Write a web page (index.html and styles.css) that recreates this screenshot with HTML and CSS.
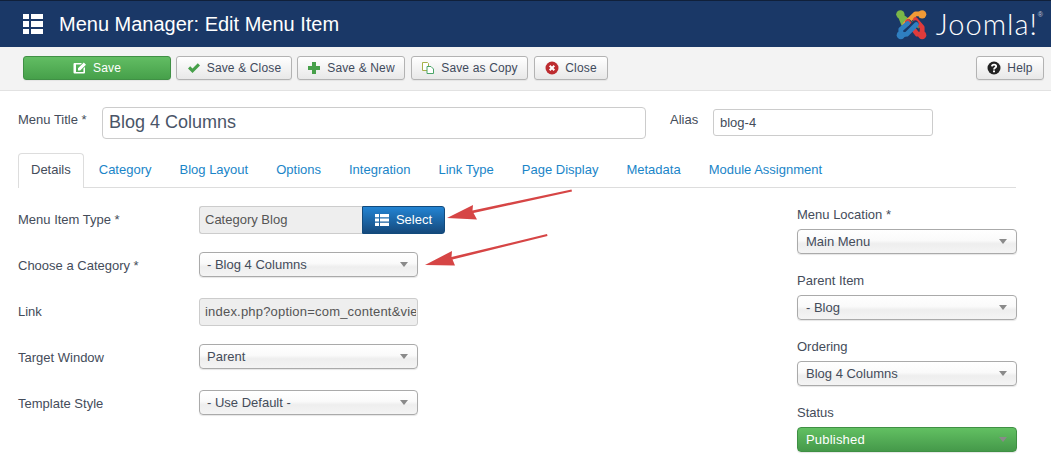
FILE: index.html
```html
<!DOCTYPE html>
<html lang="en">
<head>
<meta charset="utf-8">
<title>Menu Manager: Edit Menu Item</title>
<link rel="stylesheet" href="styles.css">
</head>
<body>
<div class="page">
  <header class="topbar">
    <div class="topbar-title">
      <svg class="title-icon" viewBox="0 0 20 20"><path fill="#fff" d="M0 0h6v5H0zM8 0h12v5H8zM0 7h6v6H0zM8 7h12v6H8zM0 15h6v5H0zM8 15h12v5H8z"/></svg>
      <h1>Menu Manager: Edit Menu Item</h1>
    </div>
    <div class="brand">
      <svg class="brand-mark" viewBox="0 0 32 32">
        <g fill="none" stroke-linecap="round" stroke-linejoin="round">
          <path stroke="#7ab648" stroke-width="5" d="M4 6 L8 16 M4 6 L21 19"/>
          <path stroke="#f09a36" stroke-width="5" d="M27 5 L20 5 L9 16"/>
          <path stroke="#1a3867" stroke-width="6.500" d="M13 14 L23 25"/>
          <path stroke="#df3b3b" stroke-width="5" d="M27 26 L22 26 L12 13 M27 26 L27 19 L20 11"/>
          <path stroke="#1a3867" stroke-width="6.500" d="M10 24 L20 15"/>
          <path stroke="#2f7fc1" stroke-width="5" d="M5 27 L5 21 L12 15 M5 27 L11 26 L21 16"/>
        </g>
        <circle cx="4.500" cy="5.500" r="4.300" fill="#7ab648"/>
        <circle cx="27" cy="5.500" r="4.300" fill="#f09a36"/>
        <circle cx="5" cy="27" r="4.300" fill="#2f7fc1"/>
        <circle cx="27" cy="27" r="4.300" fill="#df3b3b"/>
      </svg>
      <span class="brand-name">Joomla!</span><sup class="brand-reg">®</sup>
    </div>
  </header>

  <nav class="toolbar">
    <button class="btn btn-save" type="button">
      <svg class="ico" viewBox="0 0 14 14"><path fill="#fff" d="M1.500 2H9L7.500 3.600H3v7.400h7.400V7.500L12 6v5.500a1 1 0 0 1-1 1H1.500a1 1 0 0 1-1-1V3a1 1 0 0 1 1-1z"/><path fill="#fff" d="M5 7.300 10.800 1.500 13 3.700 7.200 9.500 5 9.500z"/></svg>
      Save
    </button>
    <button class="btn btn-close-save" type="button">
      <svg class="ico" viewBox="0 0 14 14"><path fill="#47a04a" d="M1 7.500 3.200 5.300 5.500 7.600 10.800 2.300 13 4.500 5.500 12z"/></svg>
      Save &amp; Close
    </button>
    <button class="btn btn-new" type="button">
      <svg class="ico" viewBox="0 0 14 14"><path fill="#47a04a" d="M5 1h4v4h4v4H9v4H5V9H1V5h4z"/></svg>
      Save &amp; New
    </button>
    <button class="btn btn-copy" type="button">
      <svg class="ico" viewBox="0 0 14 14"><path fill="#fff" stroke="#a6b04a" d="M1.500 1.500h5l1 1v7h-6z"/><path fill="#fff" stroke="#4aa568" d="M6 5.500h4l2.500 2.500v4.500H6z"/></svg>
      Save as Copy
    </button>
    <button class="btn btn-close" type="button">
      <svg class="ico" viewBox="0 0 14 14"><circle cx="7" cy="7" r="6.500" fill="#bd2c30"/><path stroke="#fff" stroke-width="2" d="M4.700 4.700l4.600 4.600M9.300 4.700l-4.600 4.600"/></svg>
      Close
    </button>
    <button class="btn btn-help" type="button">
      <svg class="ico" viewBox="0 0 14 14"><circle cx="7" cy="7" r="6.500" fill="#222"/><path fill="none" stroke="#fff" stroke-width="1.800" d="M4.900 5.400C5 2.900 9.200 3 9.200 5.300 9.200 6.800 7 6.700 7 8.500"/><path fill="#fff" d="M6 9.400h2v1.800H6z"/></svg>
      Help
    </button>
  </nav>

  <main class="content">
    <div class="title-row">
      <label class="title-label">Menu Title *</label>
      <input class="title-input" type="text" value="Blog 4 Columns">
      <label class="alias-label">Alias</label>
      <input class="alias-input" type="text" value="blog-4">
    </div>

    <ul class="tabs">
      <li class="tab tab-active">Details</li>
      <li class="tab">Category</li>
      <li class="tab">Blog Layout</li>
      <li class="tab">Options</li>
      <li class="tab">Integration</li>
      <li class="tab">Link Type</li>
      <li class="tab">Page Display</li>
      <li class="tab">Metadata</li>
      <li class="tab">Module Assignment</li>
    </ul>

    <div class="pane">
      <div class="fields">
        <div class="field">
          <label class="field-label">Menu Item Type *</label>
          <div class="input-group">
            <input class="readonly readonly-short" type="text" value="Category Blog" readonly>
            <button class="btn-select" type="button">
              <svg class="ico-select" viewBox="0 0 14 14"><path fill="#fff" d="M0 1h4v3.300H0zM5 1h9v3.300H5zM0 5.400h4v3.200H0zM5 5.400h9v3.200H5zM0 9.700h4V13H0zM5 9.700h9V13H5z"/></svg>
              Select
            </button>
          </div>
        </div>
        <div class="field">
          <label class="field-label">Choose a Category *</label>
          <div class="select">- Blog 4 Columns</div>
        </div>
        <div class="field">
          <label class="field-label">Link</label>
          <input class="readonly readonly-link" type="text" value="index.php?option=com_content&amp;view=category&amp;layout=blog" readonly>
        </div>
        <div class="field">
          <label class="field-label">Target Window</label>
          <div class="select">Parent</div>
        </div>
        <div class="field">
          <label class="field-label">Template Style</label>
          <div class="select">- Use Default -</div>
        </div>
      </div>

      <aside class="side">
        <div class="side-field">
          <label class="side-label">Menu Location *</label>
          <div class="select">Main Menu</div>
        </div>
        <div class="side-field">
          <label class="side-label">Parent Item</label>
          <div class="select">- Blog</div>
        </div>
        <div class="side-field">
          <label class="side-label">Ordering</label>
          <div class="select">Blog 4 Columns</div>
        </div>
        <div class="side-field">
          <label class="side-label">Status</label>
          <div class="select select-green">Published</div>
        </div>
      </aside>
    </div>
  </main>

  <svg class="arrows" viewBox="0 0 1051 461">
    <path fill="#d64545" d="M447 218 473 205 472.500 210.500 571.500 189.500 572 191.500 473.500 213 477 219.500z"/>
    <path fill="#d64545" d="M425 265 452 251 451.500 257 547 234 547.500 236 452.500 259.500 455 265.500z"/>
  </svg>
</div>
</body>
</html>
```
FILE: styles.css
```css
* { box-sizing: border-box; }
html, body { margin: 0; padding: 0; background: #fff; }
body {
  font-family: "Liberation Sans", Arial, sans-serif;
  font-size: 13px;
  color: #444c5a;
}
.page { position: relative; width: 1051px; height: 461px; overflow: hidden; }

.topbar {
  height: 47px;
  background: #1a3867;
  border-top: 1px solid #10203a;
  display: flex;
  align-items: center;
  justify-content: space-between;
  padding: 0 8px 0 23px;
}
.topbar-title { display: flex; align-items: center; }
.title-icon { width: 20px; height: 20px; margin-right: 16px; margin-top: -1px; }
.topbar-title h1 { margin: 0; font-size: 20px; font-weight: 400; color: #fff; line-height: 47px; }
.brand { display: flex; align-items: center; color: #fff; }
.brand-mark { width: 31px; height: 31px; margin-right: 9px; }
.brand-name { font-family: Lato, sans-serif; font-weight: 300; font-size: 29px; line-height: 40px; letter-spacing: 1px; }
.brand-reg { font-size: 7px; line-height: 8px; align-self: flex-start; margin-top: 7px; color: #ccd; }

.toolbar {
  height: 44px;
  background: #f3f3f3;
  border-bottom: 1px solid #e2e2e2;
  display: flex;
  align-items: flex-start;
  gap: 5px;
  padding: 9px 7px 0 23px;
}
.btn {
  height: 24px;
  border: 1px solid #b3b3b3;
  border-radius: 3px;
  background: linear-gradient(#fff, #e8e8e8);
  box-shadow: 0 1px 1px rgba(0,0,0,.06);
  font: 12px "Liberation Sans", Arial, sans-serif;
  letter-spacing: .15px;
  color: #3f4a5c;
  display: flex;
  align-items: center;
  justify-content: center;
  padding: 0;
}
.ico { width: 14px; height: 14px; margin-right: 6px; flex: none; }
.btn-save { width: 148px; background: linear-gradient(#62bd63, #46a04a); border-color: #409045; color: #fff; }
.btn-close-save { width: 116px; }
.btn-new { width: 108px; margin-right: 1px; }
.btn-copy { width: 117px; margin-right: 1px; }
.btn-close { width: 74px; }
.btn-help { width: 68px; margin-left: auto; }

.content { padding: 16px 35px 0 18px; }
.title-row { display: flex; align-items: flex-start; height: 32px; }
.title-label { width: 84px; line-height: 26px; }
.title-input {
  width: 544px;
  height: 32px;
  border: 1px solid #ccc;
  border-radius: 4px;
  padding: 0 6px 2px;
  font: 18px "Liberation Sans", Arial, sans-serif;
  color: #4a5568;
}
.alias-label { margin-left: 24px; width: 43px; line-height: 26px; }
.alias-input {
  width: 220px;
  height: 27px;
  margin-top: 2px;
  border: 1px solid #ccc;
  border-radius: 3px;
  padding: 0 6px;
  font: 13px "Liberation Sans", Arial, sans-serif;
  color: #444c5a;
}

.tabs {
  list-style: none;
  margin: 14px 0 0;
  padding: 0;
  height: 35px;
  display: flex;
  border-bottom: 1px solid #ddd;
  width: 998px;
}
.tab {
  height: 34px;
  line-height: 31px;
  padding: 0 13px;
  color: #1a85c8;
  white-space: nowrap;
  border: 1px solid transparent;
  border-bottom: 0;
}
.tab-active {
  height: 35px;
  padding: 0 12px;
  margin-right: 1px;
  color: #444c5a;
  background: #fff;
  border-color: #ddd;
  border-radius: 4px 4px 0 0;
}

.pane { display: flex; justify-content: space-between; padding-top: 18px; width: 999px; }
.fields { width: 400px; }
.field { display: flex; align-items: flex-start; height: 28px; margin-bottom: 18px; }
.field-label { width: 181px; line-height: 27px; flex: none; }
.input-group { display: flex; width: 246px; }
.readonly {
  width: 219px;
  height: 28px;
  border: 1px solid #ccc;
  border-radius: 3px;
  background: #eee;
  padding: 0 1px 2px 5px;
  font: 13px "Liberation Sans", Arial, sans-serif;
  color: #555;
}
.readonly-short { width: 163px; border-radius: 3px 0 0 3px; border-right: 0; }
.readonly-link { letter-spacing: .2px; }
.btn-select {
  width: 83px;
  height: 28px;
  border: 1px solid #124a7c;
  border-radius: 0 3px 3px 0;
  background: linear-gradient(#2384d3, #15497c);
  color: #fff;
  font: 13px "Liberation Sans", Arial, sans-serif;
  display: flex;
  align-items: center;
  justify-content: center;
  padding: 0 0 1px;
}
.ico-select { width: 14px; height: 14px; margin-right: 7px; }

.select {
  position: relative;
  width: 219px;
  height: 25px;
  line-height: 23px;
  border: 1px solid #aaa;
  border-radius: 4px;
  background: linear-gradient(#fff 0, #fafafa 45%, #eee 60%, #f4f4f4 100%);
  box-shadow: 0 1px 1px rgba(0,0,0,.1);
  padding-left: 7px;
  font-size: 13px;
  color: #444c5a;
}
.select::after {
  content: "";
  position: absolute;
  right: 9px;
  top: 9px;
  border-left: 4px solid transparent;
  border-right: 4px solid transparent;
  border-top: 5px solid #8a8a8a;
}
.select-green {
  background: linear-gradient(#62c062, #45994a);
  border-color: #3f9044;
  color: #fff;
  letter-spacing: .2px;
}
.side { width: 220px; }
.side-field { margin-bottom: 18px; }
.side-label { display: block; height: 18px; line-height: 18px; margin-bottom: 5px; white-space: nowrap; }
.side .select { width: 220px; padding-left: 8px; }

.arrows { position: absolute; left: 0; top: 0; width: 1051px; height: 461px; pointer-events: none; }
```
